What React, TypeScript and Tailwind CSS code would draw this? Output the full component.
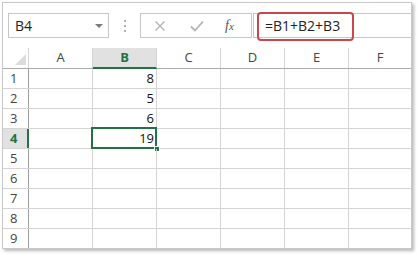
const cols = ["A", "B", "C", "D", "E", "F"];
const values: Record<number, string> = { 1: "8", 2: "5", 3: "6", 4: "19" };
const rows = [1, 2, 3, 4, 5, 6, 7, 8, 9];

const font = { fontFamily: "'Open Sans', 'Liberation Sans', sans-serif" };

function colWidth(i: number) {
  return i === cols.length - 1 ? "w-[62px]" : "w-[64px] border-r border-[#d4d4d4]";
}

export default function App() {
  return (
    <div className="w-[417px] h-[254px] bg-white" style={font}>
      <div className="relative ml-[2px] mt-[2px] w-[410px] h-[247px] border border-[#c8c8c8] bg-white shadow-[2px_2px_3px_rgba(0,0,0,0.28)] flex flex-col">
        {/* formula toolbar */}
        <div className="h-[45px] flex items-start pt-[10px] pl-[5px]">
          <div className="w-[101px] h-[25px] border border-[#c6c6c6] flex items-center justify-between pl-[6px] pr-[5px]">
            <span className="text-[14px] text-[#222] leading-none">B4</span>
            <span className="w-0 h-0 border-l-[4px] border-r-[4px] border-t-[4px] border-l-transparent border-r-transparent border-t-[#7a7a7a]" />
          </div>
          <div className="w-[31px] h-[25px] flex flex-col items-center justify-center gap-[3px]">
            <span className="w-[2px] h-[2px] bg-[#b0b0b0]" />
            <span className="w-[2px] h-[2px] bg-[#b0b0b0]" />
            <span className="w-[2px] h-[2px] bg-[#b0b0b0]" />
          </div>
          <div className="w-[112px] h-[25px] border border-[#c6c6c6] flex items-center pl-[12px]">
            <svg width="12" height="12" viewBox="0 0 12 12" className="ml-[1px]">
              <path d="M1.5 1.5 L10.5 10.5 M10.5 1.5 L1.5 10.5" stroke="#b4b4b4" strokeWidth="1.4" />
            </svg>
            <svg width="14" height="12" viewBox="0 0 14 12" className="ml-[24px]">
              <path d="M1 6.5 L5 10.5 L13 1.5" stroke="#b4b4b4" strokeWidth="1.8" fill="none" />
            </svg>
            <span
              className="ml-[21px] text-[14px] italic text-[#555] leading-none"
              style={{ fontFamily: "'Liberation Serif', serif" }}
            >
              f<span className="text-[11px]">x</span>
            </span>
          </div>
          <div className="ml-[1px] flex-1 h-[25px] border-t border-b border-l border-[#c6c6c6] flex items-center pl-[11px]">
            <span className="text-[14px] text-[#222] leading-none">=B1+B2+B3</span>
          </div>
          <div className="absolute left-[254px] top-[9px] w-[97px] h-[29px] border-2 border-[#c9474a] rounded-[4px]" />
        </div>

        {/* column headers */}
        <div className="h-[21px] flex border-b border-[#ababab]">
          <div className="w-[26px] border-r border-[#d4d4d4] relative">
            <svg width="11" height="11" viewBox="0 0 11 11" className="absolute right-[2px] bottom-[3px]">
              <polygon points="11,0 11,11 0,11" fill="#dcdcdc" />
            </svg>
          </div>
          {cols.map((c, i) => (
            <div
              key={c}
              className={`${colWidth(i)} flex items-center justify-center text-[13px] ${
                c === "B" ? "bg-[#e1e1e1] text-[#217346] font-bold border-b-2 border-b-[#217346] -mb-px" : "text-[#444]"
              }`}
            >
              {c}
            </div>
          ))}
        </div>

        {/* rows */}
        {rows.map((r) => (
          <div
            key={r}
            className={`flex ${r === 9 ? "h-[19px]" : "h-[20px] border-b border-[#d4d4d4]"}`}
          >
            <div
              className={`w-[26px] flex items-center pl-[7px] text-[13px] ${
                r === 4
                  ? "bg-[#e1e1e1] text-[#217346] font-bold border-r-2 border-[#217346]"
                  : "text-[#444] border-r border-[#9f9f9f]"
              }`}
            >
              {r}
            </div>
            {cols.map((c, i) => (
              <div
                key={c}
                className={`${colWidth(i)} relative flex items-center justify-end pr-[2px] text-[13px] text-[#111]`}
              >
                {c === "B" ? values[r] ?? "" : ""}
                {c === "B" && r === 4 && (
                  <>
                    <div className="absolute left-[-2px] top-[-2px] w-[66px] h-[22px] border-2 border-[#217346]" />
                    <div className="absolute left-[61px] top-[17px] w-[6px] h-[6px] bg-[#217346] border border-white" />
                  </>
                )}
              </div>
            ))}
          </div>
        ))}
      </div>
    </div>
  );
}
